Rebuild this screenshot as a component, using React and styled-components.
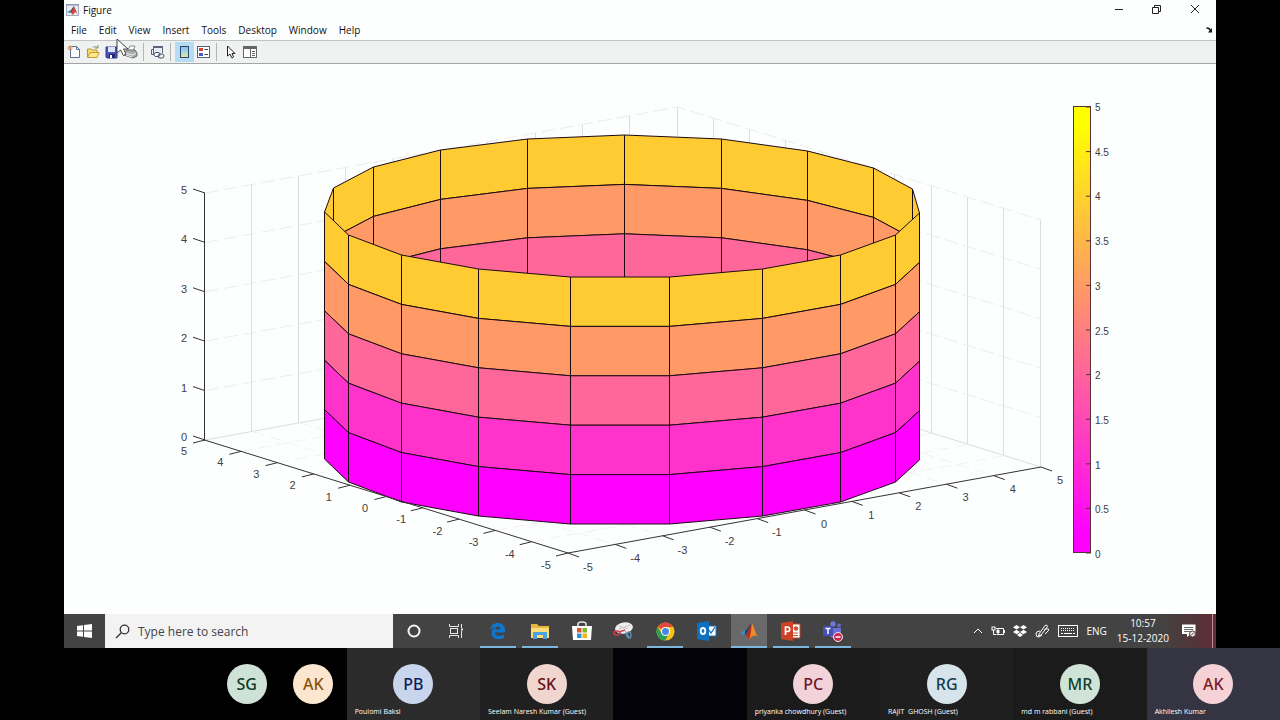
import React from "react";
import styled, { createGlobalStyle } from "styled-components";

const GlobalStyle = createGlobalStyle`
  * { box-sizing: border-box; }
  body {
    margin: 0;
    background: #000;
    font-family: "Open Sans", "Noto Sans", sans-serif;
  }
  button, input { font: inherit; color: inherit; }
`;

const Meeting = styled.div`
  min-height: 100vh;
  display: flex;
  flex-direction: column;
`;

const SharedScreen = styled.main`
  position: relative;
  width: 90%;
  margin: 0 auto;
  background: #fdfefe;
  color: #111;
`;

const TitleBar = styled.header`
  display: flex;
  align-items: center;
  height: 20px;
  padding: 0 2px;
`;

const Title = styled.h1`
  flex: 1;
  margin: 0 0 0 4px;
  font-size: 10px;
  line-height: 20px;
  font-weight: 400;
`;

const PlainButton = styled.button`
  display: flex;
  align-items: center;
  justify-content: center;
  padding: 0;
  border: 0;
  background: transparent;
`;

const WindowButton = styled(PlainButton)`
  width: 38px;
  height: 18px;
`;

const MenuBar = styled.nav`
  display: flex;
  align-items: center;
  height: 20px;
  padding: 0 3px 0 1px;
`;

const MenuItem = styled(PlainButton)`
  padding: 0 6px;
  font-size: 10px;
  line-height: 20px;
`;

const DockButton = styled(PlainButton)`
  margin-left: auto;
`;

const Toolbar = styled.div`
  display: flex;
  align-items: center;
  height: 24px;
  border-top: 1px solid #c2c4c4;
  border-bottom: 1px solid #a4a6a6;
  background: #f0f1f1;
`;

const ToolButton = styled(PlainButton)`
  width: 19px;
  height: 20px;
  background: ${(p) => (p.$active ? "#b5dcf5" : "transparent")};
`;

const Separator = styled.span`
  width: 1px;
  height: 18px;
  margin: 0 4px 0 3px;
  background: #b2b4b5;
`;

const Plot = styled.svg`
  display: block;
  width: 100%;
  height: auto;
  font-family: "Liberation Sans", Arial, sans-serif;
`;

const Pointer = styled.svg`
  position: absolute;
  left: 52px;
  top: 38px;
`;

const Taskbar = styled.footer`
  display: flex;
  height: 34px;
  color: #fff;
  background: linear-gradient(90deg, #434343 0 95%, #4b3a3c 97%, #622c35);
`;

const StartButton = styled(PlainButton)`
  width: 41px;
`;

const SearchBox = styled.label`
  display: flex;
  align-items: center;
  gap: 8px;
  width: 25%;
  padding: 0 10px;
  background: #f3f3f3;
  color: #333;
`;

const SearchInput = styled.input`
  flex: 1;
  min-width: 0;
  padding: 0;
  border: 0;
  outline: 0;
  background: transparent;
  font-size: 12px;
  &::placeholder { color: #444; opacity: 1; }
`;

const Tasks = styled.div`
  display: flex;
  width: 40%;
`;

const TaskButton = styled(PlainButton)`
  flex: 1;
  margin: 0 3px;
  background: ${(p) => (p.$active ? "#696969" : "transparent")};
  box-shadow: ${(p) => (p.$open ? "inset 0 -2px #7db7e0" : "none")};
`;

const Tray = styled.div`
  display: flex;
  align-items: center;
  gap: 8px;
  margin-left: auto;
`;

const TrayText = styled.span`
  font-size: 10px;
  line-height: 15px;
  text-align: center;
`;

const Clock = styled.time`
  margin: 0 5px 0 2px;
  font-size: 10px;
  line-height: 15px;
  text-align: center;
`;

const ShowDesktop = styled(PlainButton)`
  align-self: stretch;
  width: 4px;
  margin-left: 8px;
  border-left: 1px solid #b19297;
`;

const Participants = styled.section`
  display: grid;
  grid-template-columns: 3.2fr 1fr 1fr repeat(7, 2fr);
  flex: 1;
  min-height: 72px;
`;

const Tile = styled.article`
  display: flex;
  flex-direction: column;
  align-items: center;
  grid-column-start: ${(p) => p.$column || "auto"};
  padding-top: 16px;
  min-width: 0;
  background: ${(p) => p.$bg};
`;

const Avatar = styled.div`
  width: 40px;
  height: 40px;
  border-radius: 50%;
  background: ${(p) => p.$bg};
  color: ${(p) => p.$fg};
  font-size: 16px;
  line-height: 40px;
  font-weight: 500;
  text-align: center;
  font-family: "Noto Sans", sans-serif;
`;

const Name = styled.span`
  align-self: stretch;
  padding: 3px 0 0 8px;
  color: #fff;
  font-size: 7px;
  line-height: 10px;
  font-weight: 500;
  white-space: pre;
  overflow: hidden;
`;

/* ---------- plot ---------- */

const STEP = 49.4;
const BANDS = ["#fecb32", "#ff9966", "#ff6699", "#ff33cc", "#ff00ff"];
const FRONT = [
  [325, 212], [349, 235], [402, 255], [479, 269], [571, 277],
  [670, 277], [763, 269], [841, 255], [896, 235], [920, 213],
];
const BACK = [
  [325, 212], [334, 188], [374, 167], [441, 150], [528, 139], [625, 135],
  [722, 139], [808, 151], [874, 168], [913, 189], [920, 213],
];

/* Vertices sit on pixel centres so that the upright edges stay one pixel wide. */
function Wall({ ring }) {
  return (
    <g transform="translate(-0.5 0)" stroke="#1c0a12" strokeLinejoin="round">
      {BANDS.map((fill, band) =>
        ring.slice(1).map(([x2, y2], i) => {
          const [x1, y1] = ring[i];
          const d = band * STEP;
          const points = `${x1},${y1 + d} ${x2},${y2 + d} ${x2},${y2 + d + STEP} ${x1},${y1 + d + STEP}`;
          return <polygon key={`${band}-${i}`} points={points} fill={fill} />;
        })
      )}
    </g>
  );
}

const range = (n) => Array.from({ length: n }, (_, i) => i);

function Grid() {
  return (
    <g fill="none">
      <g stroke="#dcdddd">
        {range(9).map((i) => {
          const x = Math.floor(205 + (i + 1) * 47.3) - 0.5;
          const y = 440 - (i + 1) * 8.6;
          return <path key={i} d={`M${x} ${y}V${y - 247}`} />;
        })}
        {range(11).map((i) => {
          const x = Math.floor(678 + i * 36.3) - 0.5;
          const y = 354 + i * 11.3;
          return <path key={i} d={`M${x} ${y}V${y - 247}`} />;
        })}
        <path d="M205 440L678 354L1041 467" />
      </g>
      <g stroke="#ededee" strokeDasharray="14 5">
        {range(5).map((i) => {
          const y = 193 + i * STEP;
          return <path key={i} d={`M205 ${y}L678 ${y - 86}L1041 ${y + 27}`} />;
        })}
      </g>
      <g stroke="#f2f2f2" strokeDasharray="12 6">
        {range(9).map((i) => {
          const k = i + 1;
          return (
            <path
              key={i}
              d={`M${205 + k * 36.3} ${440 + k * 11.3}l473 -86M${205 + k * 47.3} ${440 - k * 8.6}l363 113`}
            />
          );
        })}
      </g>
    </g>
  );
}

function Axes() {
  return (
    <g>
      <g stroke="#333" fill="none">
        <path d="M204.500 193V440L568 553L1041 467" />
        {range(6).map((i) => <path key={i} d={`M205 ${440 - i * STEP}l-12 -4`} />)}
        {range(11).map((i) => <path key={i} d={`M${205 + i * 36.3} ${440 + i * 11.3}l-12 3`} />)}
        {range(11).map((i) => <path key={i} d={`M${568 + i * 47.3} ${553 - i * 8.6}l11 4`} />)}
      </g>
      <g fill="#404040" fontSize="11" textAnchor="middle">
        {range(6).map((i) => <text key={i} x="184" y={441 - i * STEP}>{i}</text>)}
        {range(11).map((i) => <text key={i} x={184 + i * 36.2} y={455 + i * 11.4}>{5 - i}</text>)}
        {range(11).map((i) => <text key={i} x={588 + i * 47.2} y={571 - i * 8.7}>{i - 5}</text>)}
      </g>
    </g>
  );
}

function Colorbar() {
  return (
    <g>
      <defs>
        <linearGradient id="spring" x1="0" y1="1" x2="0" y2="0">
          <stop offset="0.04" stopColor="#f0f" />
          <stop offset="0.96" stopColor="#ff0" />
        </linearGradient>
      </defs>
      <rect x="1073.500" y="106.500" width="17" height="446" fill="url(#spring)" stroke="#5a3038" />
      {range(11).map((i) => (
        <g key={i}>
          <path d={`M1086 ${553 - i * 44.6}h5`} stroke="#5a3038" />
          <text x="1095" y={558 - i * 44.7} fontSize="10" fill="#404040">{i / 2}</text>
        </g>
      ))}
    </g>
  );
}

/* ---------- icons ---------- */

const MatlabMark = ({ size }) => (
  <svg width={size} height={size} viewBox="0 0 20 20">
    <path d="M0 12L6 9L9 12L5 15Z" fill="#3d8fc4" />
    <path d="M6 9C9 8 10 3 13 1L9 12L5 15Z" fill="#23406e" />
    <path d="M13 1C11 4 10 11 5 15C8 14 9 18 10 20C13 18 14 14 16 14Z" fill="#b3331c" />
    <path d="M13 1C15 3 17 12 20 17C17 13 13 16 10 20C12 14 13 7 13 1Z" fill="#f0892c" />
  </svg>
);

const toolIcons = {
  New: (
    <svg width="14" height="14" viewBox="0 0 14 14">
      <path d="M3.500 1.500H9.500L12.500 4.500V12.500H3.500Z" fill="#fff" stroke="#5d7394" />
      <path d="M9.500 1.500V4.500H12.500" fill="none" stroke="#5d7394" />
      <path d="M3 0V6M0 3H6M1 1L5 5M5 1L1 5" stroke="#e28a52" strokeWidth="0.800" />
    </svg>
  ),
  Open: (
    <svg width="14" height="14" viewBox="0 0 14 14">
      <path d="M1.500 12V4H5L6 5H11V7" fill="#f8dc74" stroke="#bd9430" />
      <path d="M1.500 12.500L4 7.500H13L11 12.500Z" fill="#ffe98b" stroke="#c49b35" />
      <path d="M7 3C8 1 10 1 12 3M12 0V3H9" fill="none" stroke="#7d9b6a" />
    </svg>
  ),
  Save: (
    <svg width="13" height="13" viewBox="0 0 13 13">
      <path d="M1 1H12V12H2L1 11Z" fill="#4a50b5" stroke="#333c96" />
      <path d="M3 1H10V6H3Z" fill="#dfe6fa" />
      <path d="M4 8H10V12H4Z" fill="#252b60" />
      <path d="M5 9H7V12H5Z" fill="#fff" />
    </svg>
  ),
  Print: (
    <svg width="15" height="14" viewBox="0 0 15 14">
      <path d="M5 5L7 1H12L10 6" fill="#fff" stroke="#888" />
      <path d="M1 7L4 5H12L14 8V11L10 13L1 10Z" fill="#a9abad" stroke="#686a6c" />
      <path d="M2 8L10 10L13 8M3 10L9 12" stroke="#eee" fill="none" />
    </svg>
  ),
  "Link plot": (
    <svg width="15" height="14" viewBox="0 0 15 14">
      <path d="M3.500 9V1.500H12.500V8" fill="#e8eef8" stroke="#5c6379" />
      <path d="M3 2H13" stroke="#5c6379" strokeWidth="2" />
      <path d="M3 4.500H1.500V9.500H4" fill="none" stroke="#5c6379" />
      <rect x="4" y="7.500" width="6" height="4" rx="2" fill="#fff" stroke="#47516e" />
      <rect x="8" y="9" width="6" height="4" rx="2" fill="none" stroke="#47516e" />
    </svg>
  ),
  "Insert colorbar": (
    <svg width="9" height="14" viewBox="0 0 9 14">
      <defs>
        <linearGradient id="cbIcon" x1="0" y1="0" x2="0" y2="1">
          <stop offset="0" stopColor="#8fb8ed" />
          <stop offset="0.500" stopColor="#9bdde2" />
          <stop offset="1" stopColor="#f5e48a" />
        </linearGradient>
      </defs>
      <rect x="0.500" y="1.500" width="8" height="11" fill="url(#cbIcon)" stroke="#34456b" />
    </svg>
  ),
  "Insert legend": (
    <svg width="14" height="14" viewBox="0 0 14 14">
      <rect x="0.500" y="1.500" width="12" height="11" fill="#fff" stroke="#53617f" />
      <path d="M2 3H6V6H2Z" fill="#d4453d" />
      <path d="M2 8H6V11H2Z" fill="#4757c9" />
      <path d="M7.500 4.500H11M7.500 9.500H11" stroke="#444" />
    </svg>
  ),
  "Edit plot": (
    <svg width="10" height="14" viewBox="0 0 10 14">
      <path d="M1.500 1V11L4 9L6 13L7.500 12L6 8.500H9Z" fill="#fff" stroke="#222" />
    </svg>
  ),
  "Property inspector": (
    <svg width="14" height="14" viewBox="0 0 14 14">
      <rect x="0.500" y="1.500" width="13" height="11" fill="#fff" stroke="#666" />
      <path d="M1 3H13" stroke="#666" strokeWidth="2" />
      <path d="M7.500 3V12M9 6.500H12M9 8.500H12M9 10.500H12" stroke="#666" />
    </svg>
  ),
};

const taskIcons = {
  Cortana: (
    <svg width="16" height="16" viewBox="0 0 16 16">
      <circle cx="8" cy="8" r="5.500" fill="none" stroke="#f4f4f4" strokeWidth="2" />
    </svg>
  ),
  "Task view": (
    <svg width="16" height="14" viewBox="0 0 16 14" fill="none" stroke="#e8e8e8">
      <rect x="2.500" y="4.500" width="7" height="5" />
      <path d="M1.500 0V2.500H10.500V0M1.500 14V11.500H10.500V14M13.500 0V4M13.500 7V14" />
      <path d="M13 5.500H15" strokeWidth="2" />
    </svg>
  ),
  Edge: (
    <svg width="17" height="18" viewBox="0 0 18 18">
      <path d="M1.500 8C2 3 5 0.500 9.500 0.500C14.500 0.500 17 4 17 8V10.500H6.500C6.700 13 8.500 14.200 11 14.200C13 14.200 14.500 13.700 16 12.800V16.200C14.500 17.200 12.500 17.700 10 17.700C5.500 17.700 2.700 15 2.700 11.200C2.700 8.500 4.200 6.200 6.800 5C4.500 5.200 2.600 6.300 1.500 8ZM6.600 7.500H12C12 5.500 11 4.200 9.300 4.200C7.800 4.200 6.800 5.500 6.600 7.500Z" fill="#0d77d0" />
    </svg>
  ),
  "File Explorer": (
    <svg width="20" height="18" viewBox="0 0 20 18">
      <path d="M1 2H7L9 4H19V15H1Z" fill="#e8b83e" />
      <path d="M1 6H19V16H1Z" fill="#fbdc78" />
      <path d="M3 10H17V17H13V13H7V17H3Z" fill="#4aa3df" />
    </svg>
  ),
  Store: (
    <svg width="20" height="20" viewBox="0 0 20 20">
      <path d="M6 5V3Q6 1 10 1Q14 1 14 3V5" fill="none" stroke="#ececec" strokeWidth="1.500" />
      <path d="M0 5H20L19 19H1Z" fill="#fff" />
      <path d="M5 7H9.500V11.500H5Z" fill="#e8502f" />
      <path d="M10.500 7H15V11.500H10.500Z" fill="#78b82a" />
      <path d="M5 12.500H9.500V17H5Z" fill="#2793dc" />
      <path d="M10.500 12.500H15V17H10.500Z" fill="#f4b519" />
    </svg>
  ),
  "Snipping Tool": (
    <svg width="21" height="18" viewBox="0 0 21 18">
      <ellipse cx="11" cy="6" rx="9" ry="5.500" fill="#eee" transform="rotate(-10 11 6)" />
      <path d="M6 7L17 3M6 4L15 7" stroke="#cdbfc3" />
      <ellipse cx="4" cy="11" rx="3" ry="2" fill="none" stroke="#d23c4d" strokeWidth="1.500" />
      <path d="M6 10L12 8" stroke="#c94a57" strokeWidth="1.500" />
      <path d="M12 8L18 17L13 14Z" fill="#6fa0c4" />
      <ellipse cx="16" cy="13" rx="2" ry="3" fill="none" stroke="#5889a8" strokeWidth="1.500" />
    </svg>
  ),
  Chrome: (
    <svg width="19" height="19" viewBox="0 0 20 20">
      <circle cx="10" cy="10" r="9.500" fill="#fbc116" />
      <path d="M10 10L1.800 5.200A9.500 9.500 0 0 1 18.200 5.200H10Z" fill="#df4a3c" />
      <path d="M1.800 5.200A9.500 9.500 0 0 0 9.500 19.500L14 12L6 12Z" fill="#279f5a" />
      <circle cx="10" cy="10" r="4.800" fill="#fff" />
      <circle cx="10" cy="10" r="3.700" fill="#4a86e8" />
    </svg>
  ),
  Outlook: (
    <svg width="20" height="20" viewBox="0 0 20 20">
      <path d="M10 5H19V15H10Z" fill="#fff" />
      <path d="M10 5H19V15H10" fill="none" stroke="#1a75c4" />
      <path d="M12 9L14 12L18 6" fill="none" stroke="#1a75c4" strokeWidth="1.300" />
      <path d="M0 2L12 0V20L0 18Z" fill="#0e71c1" />
      <ellipse cx="6" cy="10" rx="2.300" ry="3" fill="none" stroke="#fff" strokeWidth="1.800" />
    </svg>
  ),
  MATLAB: <MatlabMark size={18} />,
  PowerPoint: (
    <svg width="20" height="20" viewBox="0 0 20 20">
      <path d="M10 3H19V17H10Z" fill="#fff" stroke="#c94425" />
      <path d="M12 12H17M12 14.500H17" stroke="#d15235" />
      <circle cx="15" cy="7.500" r="2.300" fill="#d15235" />
      <path d="M0 2L12 0V20L0 18Z" fill="#cd4224" />
      <path d="M4.500 14V6H6.500A2.200 2.200 0 0 1 6.500 10.500H4.500" fill="none" stroke="#fff" strokeWidth="1.700" />
    </svg>
  ),
  Teams: (
    <svg width="21" height="21" viewBox="0 0 21 21">
      <circle cx="11" cy="3" r="2.700" fill="#7177d8" />
      <circle cx="17" cy="4.500" r="2" fill="#6068c9" />
      <path d="M7 7H19V12Q19 17 13 17Q7 17 7 12Z" fill="#6971d4" />
      <path d="M1 5H11V15H1Z" fill="#4450b7" />
      <path d="M3.500 7.500H8.500M6 7.500V13" stroke="#fff" strokeWidth="1.500" />
      <circle cx="16" cy="16" r="4.500" fill="#c8284f" stroke="#eee" />
      <path d="M13.500 16H18.500" stroke="#fff" strokeWidth="1.500" />
    </svg>
  ),
};

const TASKS = [
  { name: "Cortana" },
  { name: "Task view" },
  { name: "Edge", open: true },
  { name: "File Explorer", open: true },
  { name: "Store" },
  { name: "Snipping Tool" },
  { name: "Chrome", open: true },
  { name: "Outlook" },
  { name: "MATLAB", open: true, active: true },
  { name: "PowerPoint", open: true },
  { name: "Teams", open: true },
];

const PEOPLE = [
  { initials: "SG", bg: "#cfe2d8", fg: "#0c3b24", tile: "#000", column: 2 },
  { initials: "AK", bg: "#fde6cf", fg: "#89530f", tile: "#000" },
  { initials: "PB", bg: "#c9d5ec", fg: "#0c1c5c", tile: "#2b2b2b", name: "Poulomi Baksi" },
  { initials: "SK", bg: "#f1d6cf", fg: "#681018", tile: "#202020", name: "Seelam Naresh Kumar (Guest)" },
  { tile: "#030208" },
  { initials: "PC", bg: "#f1d3d9", fg: "#701629", tile: "#1b1b1b", name: "priyanka chowdhury (Guest)" },
  { initials: "RG", bg: "#d7e4eb", fg: "#123b4d", tile: "#1f1f1f", name: "RAJIT  GHOSH (Guest)" },
  { initials: "MR", bg: "#cfe3d7", fg: "#123d2a", tile: "#1b1b1b", name: "md m rabbani (Guest)" },
  { initials: "AK", bg: "#f5d2d5", fg: "#7b1a2b", tile: "#353442", name: "Akhilesh Kumar" },
];

const MENUS = ["File", "Edit", "View", "Insert", "Tools", "Desktop", "Window", "Help"];

const Tool = ({ name, active }) => (
  <ToolButton type="button" aria-label={name} $active={active}>{toolIcons[name]}</ToolButton>
);

export default function App() {
  return (
    <Meeting>
      <GlobalStyle />
      <SharedScreen>
        <TitleBar>
          <svg width="13" height="12" viewBox="0 0 13 12">
            <rect x="0.500" y="0.500" width="12" height="11" fill="#e9eff7" stroke="#9eabc0" />
            <path d="M0 1H13" stroke="#8190aa" />
            <path d="M1 8L5 6L4 9Z" fill="#3f7fae" />
            <path d="M5 6L8 2L8 7L4 9Z" fill="#35456d" />
            <path d="M8 2L11.500 10L9 8L7 11L5 9Z" fill="#d1482a" />
          </svg>
          <Title>Figure</Title>
          <WindowButton type="button" aria-label="Minimize">
            <svg width="10" height="10" viewBox="0 0 10 10"><path d="M1 4.500H9" stroke="#222" /></svg>
          </WindowButton>
          <WindowButton type="button" aria-label="Restore">
            <svg width="10" height="10" viewBox="0 0 10 10" fill="none" stroke="#222">
              <path d="M0.500 2.500H6.500V8.500H0.500ZM2.500 2V0.500H8.500V6.500H7" />
            </svg>
          </WindowButton>
          <WindowButton type="button" aria-label="Close">
            <svg width="10" height="10" viewBox="0 0 10 10"><path d="M1 0L9 8M9 0L1 8" stroke="#222" /></svg>
          </WindowButton>
        </TitleBar>
        <MenuBar aria-label="Figure menu">
          {MENUS.map((m) => <MenuItem type="button" key={m}>{m}</MenuItem>)}
          <DockButton type="button" aria-label="Dock figure">
            <svg width="7" height="6" viewBox="0 0 7 6">
              <path d="M0.500 1L3 1.500L5 4" fill="none" stroke="#111" strokeWidth="1.500" />
              <path d="M6 1V5.500H2Z" fill="#111" />
            </svg>
          </DockButton>
        </MenuBar>
        <Toolbar role="toolbar" aria-label="Figure tools">
          <Tool name="New" />
          <Tool name="Open" />
          <Tool name="Save" />
          <Tool name="Print" />
          <Separator />
          <Tool name="Link plot" />
          <Separator />
          <Tool name="Insert colorbar" active />
          <Tool name="Insert legend" />
          <Separator />
          <Tool name="Edit plot" />
          <Tool name="Property inspector" />
        </Toolbar>
        <Plot viewBox="64 64 1152 550" role="img" aria-label="Cylinder surface plot">
          <Grid />
          <Wall ring={BACK} />
          <Wall ring={FRONT} />
          <Axes />
          <Colorbar />
        </Plot>
        <Taskbar>
          <StartButton type="button" aria-label="Start">
            <svg width="15" height="14" viewBox="0 0 15 14" fill="#fff">
              <path d="M0 2L6 1.200V6.500H0ZM7 1L15 0V6.500H7ZM0 7.500H6V12.800L0 12ZM7 7.500H15V14L7 13Z" />
            </svg>
          </StartButton>
          <SearchBox>
            <svg width="15" height="15" viewBox="0 0 15 15" fill="none" stroke="#333" strokeWidth="1.300">
              <circle cx="9.500" cy="5.500" r="4.300" />
              <path d="M6.300 8.700L1 14" />
            </svg>
            <SearchInput type="text" aria-label="Search" placeholder="Type here to search" />
          </SearchBox>
          <Tasks>
            {TASKS.map((t) => (
              <TaskButton key={t.name} type="button" aria-label={t.name} $open={t.open} $active={t.active}>
                {taskIcons[t.name]}
              </TaskButton>
            ))}
          </Tasks>
          <Tray>
            <svg width="10" height="6" viewBox="0 0 10 6"><path d="M1 5L5 1L9 5" fill="none" stroke="#fff" /></svg>
            <svg width="14" height="10" viewBox="0 0 14 10" fill="none" stroke="#fff">
              <path d="M5 2.500H12.500V8.500H5.500M13.500 4V7" />
              <rect x="1" y="1" width="3" height="3" />
              <path d="M2.500 4V8.500H5" />
              <path d="M6 4H8V7H6Z" fill="#fff" />
            </svg>
            <svg width="14" height="12" viewBox="0 0 14 12" fill="#fff">
              <path d="M3.500 0L7 2.300L3.500 4.600L0 2.300ZM10.500 0L14 2.300L10.500 4.600L7 2.300ZM3.500 4.800L7 7L3.500 9.300L0 7ZM10.500 4.800L14 7L10.500 9.300L7 7ZM7 7.800L10 10L7 12L4 10Z" />
            </svg>
            <svg width="15" height="14" viewBox="0 0 15 14" fill="none" stroke="#fff">
              <path d="M4 10L10 1.500Q12 0 12.500 2.500L6 11L3.500 12ZM5 7Q1 7 1 10Q1 13.500 4 13L7 11M9 6Q11 4 13.500 5Q14 7 12 8L10 10" />
            </svg>
            <svg width="20" height="12" viewBox="0 0 20 12" fill="none" stroke="#fff">
              <rect x="0.500" y="0.500" width="19" height="11" />
              <path d="M3 3.500H17M3 5.500H17" strokeDasharray="1 1" />
              <path d="M3 8.500H5M6 8.500H14M15 8.500H17" />
            </svg>
            <TrayText>ENG</TrayText>
            <Clock dateTime="2020-12-15T10:57">10:57<br />15-12-2020</Clock>
            <svg width="14" height="14" viewBox="0 0 14 14">
              <path d="M0 0.500H13.500V10H9L5 13V10H0Z" fill="#fff" />
              <path d="M2 3.500H11M2 5.500H11M2 7.500H8" stroke="#666" />
              <circle cx="10.500" cy="10" r="3" fill="#eee" stroke="#5b343a" />
              <path d="M9 11.500L12 8.500" stroke="#5b343a" />
            </svg>
            <ShowDesktop type="button" aria-label="Show desktop" />
          </Tray>
        </Taskbar>
        <Pointer width="15" height="19" viewBox="0 0 15 19">
          <path d="M1 1V15L4.500 12L7.500 17.500L10 16L7.500 11H12Z" fill="#fff" stroke="#444" />
        </Pointer>
      </SharedScreen>
      <Participants aria-label="Participants">
        {PEOPLE.map((p, i) => (
          <Tile key={i} $bg={p.tile} $column={p.column}>
            {p.initials && <Avatar $bg={p.bg} $fg={p.fg}>{p.initials}</Avatar>}
            {p.name && <Name>{p.name}</Name>}
          </Tile>
        ))}
      </Participants>
    </Meeting>
  );
}
